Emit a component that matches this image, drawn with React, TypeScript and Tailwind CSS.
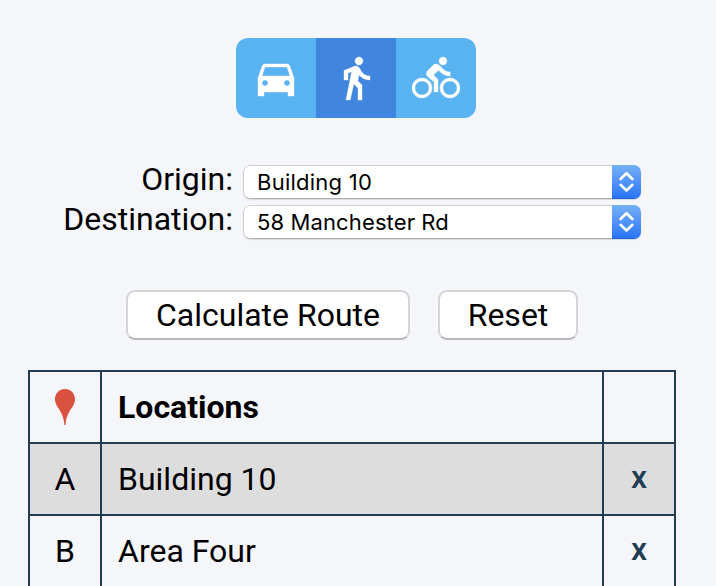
import React from "react";

const ROBOTO = "font-['Roboto','Liberation_Sans',sans-serif]";

const modes = [
  {
    name: "Drive",
    active: false,
    path: "M18.92 6.01C18.72 5.42 18.16 5 17.5 5h-11c-.66 0-1.21.42-1.42 1.01L3 12v9h3v-2h12v2h3v-9l-2.08-5.99zM6.5 16c-.83 0-1.5-.67-1.5-1.5S5.67 13 6.5 13s1.5.67 1.5 1.5S7.33 16 6.5 16zm11 0c-.83 0-1.5-.67-1.5-1.5s.67-1.5 1.5-1.5 1.5.67 1.5 1.5-.67 1.5-1.5 1.5zM5 11l1.5-4.5h11L19 11H5z",
  },
  {
    name: "Walk",
    active: true,
    path: "M13.5 5.5c1.1 0 2-.9 2-2s-.9-2-2-2-2 .9-2 2 .9 2 2 2zM9.8 8.9L7 23h2.1l1.8-8 2.1 2v6h2v-7.5l-2.1-2 .6-3C14.8 12 16.8 13 19 13v-2c-1.9 0-3.5-1-4.3-2.4l-1-1.6c-.4-.6-1-1-1.7-1-.3 0-.5.1-.8.1L6 8.3V13h2V9.6l1.8-.7",
  },
  {
    name: "Cycle",
    active: false,
    path: "M15.5 5.5c1.1 0 2-.9 2-2s-.9-2-2-2-2 .9-2 2 .9 2 2 2zM5 12c-2.8 0-5 2.2-5 5s2.2 5 5 5 5-2.2 5-5-2.2-5-5-5zm0 8.5c-1.9 0-3.5-1.6-3.5-3.5s1.6-3.5 3.5-3.5 3.5 1.6 3.5 3.5-1.6 3.5-3.5 3.5zm5.8-10l2.4-2.4.8.8c1.3 1.3 3 2.1 5.1 2.1V9c-1.5 0-2.7-.6-3.6-1.5l-1.9-1.9c-.5-.4-1-.6-1.6-.6s-1.1.2-1.4.6L7.8 8.4c-.4.4-.6.9-.6 1.4 0 .6.2 1.1.6 1.4L11 14v5h2v-6.2l-2.2-2.3zM19 12c-2.8 0-5 2.2-5 5s2.2 5 5 5 5-2.2 5-5-2.2-5-5-5zm0 8.5c-1.9 0-3.5-1.6-3.5-3.5s1.6-3.5 3.5-3.5 3.5 1.6 3.5 3.5-1.6 3.5-3.5 3.5z",
  },
];

function ModeButton({ name, active, path }: (typeof modes)[number]) {
  return (
    <button
      aria-label={name}
      className={`flex size-20 items-center justify-center ${active ? "bg-[#4086de]" : "bg-[#59b3f1]"}`}
    >
      <svg viewBox="0 0 24 24" className="size-12 fill-white stroke-white/60 stroke-[0.3]">
        <path d={path} />
      </svg>
    </button>
  );
}

function SelectRow({ label, value, textClass }: { label: string; value: string; textClass: string }) {
  return (
    <div className="flex h-10 items-start">
      <span className="w-[233px] pt-px text-right text-[32px] leading-[37px] whitespace-nowrap">{label}</span>
      <button className="mt-[5px] ml-[10px] flex h-[34px] w-[398px] overflow-hidden rounded-[7px] bg-white shadow-[0_1px_1px_rgba(0,0,0,0.12)]">
        <span className="flex h-full flex-1 items-center rounded-l-[7px] border border-r-0 border-[#cdced1] border-b-[#b0b1b4] pl-[13px] font-['Inter','Liberation_Sans',sans-serif] whitespace-nowrap">
          <span className={textClass}>{value}</span>
        </span>
        <span className="flex h-full w-[29px] items-center justify-center border-b border-[#215fe0] bg-linear-to-b from-[#75b0f6] to-[#2a74f7]">
          <svg viewBox="0 0 29 33" className="h-[33px] w-[29px] fill-none stroke-white stroke-[2.6]">
            <path d="M8.6 14 14.5 8.3 20.4 14M8.6 19.8 14.5 25.5 20.4 19.8" strokeLinecap="round" strokeLinejoin="round" />
          </svg>
        </span>
      </button>
    </div>
  );
}

function ActionButton({ label, width }: { label: string; width: string }) {
  return (
    <button
      className={`flex h-[50px] items-center justify-center rounded-[9px] border-2 border-[#d5d5d7] border-b-[#b5b6b8] bg-white text-[32px] leading-none ${width}`}
    >
      {label}
    </button>
  );
}

const rows = [
  { letter: "A", name: "Building 10", shaded: true },
  { letter: "B", name: "Area Four", shaded: false },
];

export default function App() {
  return (
    <main className={`h-[586px] w-[716px] overflow-hidden bg-[#f5f6fa] pt-[38px] text-black ${ROBOTO}`}>
      <div className="ml-[236px] flex w-60 overflow-hidden rounded-[12px]">
        {modes.map((mode) => (
          <ModeButton key={mode.name} {...mode} />
        ))}
      </div>

      <div className="mt-[42px]">
        <SelectRow label="Origin:" value="Building 10" textClass="text-[22px] leading-none tracking-[0.24px]" />
        <SelectRow label="Destination:" value="58 Manchester Rd" textClass="text-[22px] leading-none tracking-[0.12px]" />
      </div>

      <div className="mt-[50px] ml-[126px] flex gap-7">
        <ActionButton label="Calculate Route" width="w-[284px]" />
        <ActionButton label="Reset" width="w-[140px]" />
      </div>

      <table className="mt-[30px] ml-7 w-[648px] table-fixed border-separate border-spacing-0 border-t-2 border-l-2 border-[#213c53] text-[32px] leading-9">
        <colgroup>
          <col className="w-[72px]" />
          <col className="w-[502px]" />
          <col className="w-[72px]" />
        </colgroup>
        <thead>
          <tr className="h-[72px]">
            <th className="border-r-2 border-b-2 border-[#213c53] p-0">
              <svg viewBox="0 0 20 36" className="mx-auto h-9 w-5 fill-[#da5140]">
                <path d="M10 0C4.2 0 0 4.4 0 10.3 0 18.2 8.8 22 9.4 36h1.2C11.2 22 20 18.2 20 10.3 20 4.4 15.8 0 10 0z" />
              </svg>
            </th>
            <th className="border-r-2 border-b-2 border-[#213c53] p-0 pb-px pl-4 text-left font-bold">Locations</th>
            <th className="border-r-2 border-b-2 border-[#213c53] p-0" />
          </tr>
        </thead>
        <tbody>
          {rows.map((row) => (
            <tr key={row.letter} className={`h-[72px] ${row.shaded ? "bg-[#dddddd]" : ""}`}>
              <td className="border-r-2 border-b-2 border-[#213c53] p-0 pb-px text-center">{row.letter}</td>
              <td className="border-r-2 border-b-2 border-[#213c53] p-0 pb-px pl-4">{row.name}</td>
              <td className="border-r-2 border-b-2 border-[#213c53] p-0 pb-1 text-center font-medium text-[#213c53]">x</td>
            </tr>
          ))}
        </tbody>
      </table>
    </main>
  );
}
